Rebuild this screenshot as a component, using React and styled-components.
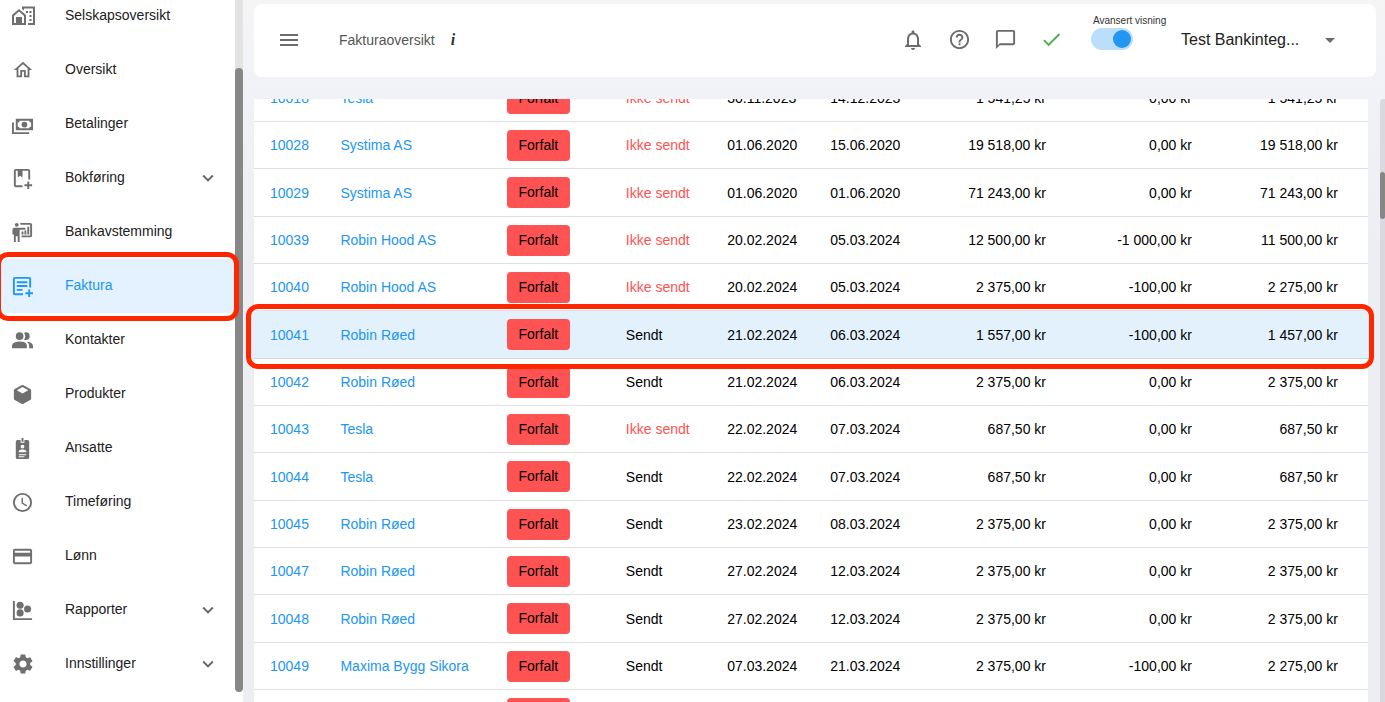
import React from "react";
import styled, { createGlobalStyle, css } from "styled-components";
import {
  MdOutlineHome,
  MdOutlineCreditCard,
  MdSettings,
  MdNotificationsNone,
  MdHelpOutline,
  MdChatBubbleOutline,
  MdCheck,
  MdArrowDropDown,
  MdExpandMore,
} from "react-icons/md";

const Global = createGlobalStyle`
  *, *::before, *::after { box-sizing: border-box; }
  body {
    margin: 0;
    overflow: hidden;
    background: #ededf4;
    color: #212121;
    font: 14px/20px "Liberation Sans", Arial, sans-serif;
  }
  button, select, input { font: inherit; color: inherit; }
`;

const Page = styled.div`
  display: flex;
  height: 100vh;
  background: linear-gradient(#f5f5f5, #f1f2f8 90px, #ededf4 260px);
`;

const Sidebar = styled.aside`
  display: flex;
  flex: none;
  width: 243px;
  background: #fff;
`;

const Nav = styled.nav`
  flex: 1;
  display: flex;
  flex-direction: column;
  justify-content: flex-end;
  padding-bottom: 11px;
`;

const NavItem = styled.a`
  position: relative;
  display: flex;
  flex: none;
  align-items: center;
  height: 54px;
  padding: 0 16px 0 10px;
  color: ${(p) => (p.$active ? "#2196f3" : "#212121")};
  background: ${(p) => (p.$active ? "#e4f1fe" : "transparent")};
  text-decoration: none;
`;

const NavIcon = styled.span`
  display: flex;
  width: 25px;
  justify-content: center;
  margin-right: 30px;
  color: ${(p) => (p.$active ? "#2196f3" : "#6f6f6f")};
`;

const NavLabel = styled.span`
  flex: 1;
  padding-bottom: 2px;
`;

const Chevron = styled(MdExpandMore)`
  color: #666;
`;

const marker = css`
  content: "";
  position: absolute;
  border: 5px solid #ff2600;
  border-radius: 12px;
  pointer-events: none;
  z-index: 3;
`;

const MarkedNavItem = styled(NavItem)`
  &::after {
    ${marker}
    inset: -7px -4px -8px -4px;
  }
`;

const SideTrack = styled.div`
  flex: none;
  width: 8px;
  padding: 68px 0 10px;
  background: linear-gradient(#e3e3e3, #e3e3e3 80%, #fff 80%);
`;

const Thumb = styled.div`
  height: ${(p) => p.$height};
  border-radius: 4px;
  background: #878787;
`;

const Main = styled.main`
  flex: 1;
  min-width: 0;
  display: flex;
  flex-direction: column;
  padding: 4px 0 0 11px;
`;

const Header = styled.header`
  display: flex;
  flex: none;
  align-items: center;
  height: 73px;
  margin-right: 9px;
  padding: 0 34px 2px 23px;
  border-radius: 8px;
  background: #fff;
`;

const IconButton = styled.button`
  display: flex;
  align-items: center;
  justify-content: center;
  width: 24px;
  height: 24px;
  padding: 0;
  border: 0;
  background: none;
  color: ${(p) => p.$color || "#6b6b6b"};
`;

const Title = styled.h1`
  margin: 0 16px 0 38px;
  color: #555;
  font-size: 14px;
  font-weight: 400;
`;

const Info = styled.button`
  padding: 0;
  border: 0;
  background: none;
  color: #333;
  font: italic 700 16px/20px "Liberation Serif", serif;
`;

const Actions = styled.div`
  display: flex;
  gap: 22px;
  margin-left: auto;
`;

const Toggle = styled.label`
  display: flex;
  flex-direction: column;
  width: 90px;
  margin: 0 0 18px 28px;
  font-size: 10px;
  line-height: 14px;
  white-space: nowrap;
  color: #333;
`;

const ToggleText = styled.span`
  margin: 2px 2px 0;
`;

const Switch = styled.input`
  appearance: none;
  width: 42px;
  height: 22px;
  margin: 0;
  padding: 2px;
  border-radius: 11px;
  background: #bbdefb;
  display: flex;
  justify-content: flex-end;

  &::before {
    content: "";
    width: 18px;
    height: 18px;
    border-radius: 50%;
    background: #2196f3;
  }
`;

const Company = styled.div`
  display: flex;
  align-items: center;
  width: 161px;
`;

const CompanySelect = styled.select`
  flex: 1;
  min-width: 0;
  appearance: none;
  padding: 0;
  border: 0;
  background: none;
  font-size: 16px;
  line-height: 24px;
`;

const Content = styled.div`
  flex: 1;
  min-height: 0;
  display: flex;
  margin-top: 22px;
`;

const Clip = styled.div`
  flex: 1;
  min-width: 0;
  display: flex;
  flex-direction: column;
  clip-path: inset(0 -10px 0 -10px);
`;

const Table = styled.table`
  width: 100%;
  margin-top: -24px;
  table-layout: fixed;
  border-collapse: separate;
  border-spacing: 0;
  background: #fff;
  color: #000;
`;

const Row = styled.tr`
  position: relative;
  background: ${(p) => (p.$marked ? "#e3f1fd" : "transparent")};
  ${(p) =>
    p.$marked &&
    css`
      &::after {
        ${marker}
        inset: -7px -6px -10px -8px;
      }
    `}
`;

const Cell = styled.td`
  height: ${(p) => (p.$tall ? 48 : 47)}px;
  padding: 0;
  border-bottom: 1px solid ${(p) => (p.$marked ? "#c9dbe0" : "#e0e0e0")};
  text-align: ${(p) => (p.$num ? "right" : "left")};
  white-space: nowrap;
  color: ${(p) => (p.$warn ? "#ff5252" : "inherit")};

  &:first-child { padding-left: 16px; }
  &:last-child { padding-right: 30px; }
`;

const CellLink = styled.a`
  color: #2196f3;
  text-decoration: none;
`;

const Badge = styled.span`
  display: block;
  width: 63px;
  height: 31px;
  border-radius: 4px;
  background: #ff5252;
  line-height: 30px;
  text-align: center;
`;

const PageTrack = styled.div`
  flex: none;
  width: 5px;
  margin-left: 12px;
  padding-top: 73px;
  border-radius: 4px 0 0 0;
  background: #d9d9df;
`;

const Glyph = ({ children, size = 23 }) => (
  <svg width={size} height={size} viewBox="0 0 24 24" fill="currentColor" aria-hidden="true">
    {children}
  </svg>
);

const HomeWork = () => (
  <Glyph size={24}>
    <path d="M1 21V11l7-6 7 6v10zM3 19h2v-6h6v6h2v-7L8 7.600 3 12z" fillRule="evenodd" />
    <path d="M5 14h6v7H5zM11 2.500h13V21h-7v-2h5V4.500h-9v2l-2-1.500z" />
    <path d="M15 7h2v2h-2zM18.500 7h2v2h-2zM18.500 11h2v2h-2zM18.500 15h2v2h-2z" />
  </Glyph>
);

const Cash = () => (
  <Glyph>
    <path d="M5,6H23V18H5V6M14,9A3,3 0 0,1 17,12A3,3 0 0,1 14,15A3,3 0 0,1 11,12A3,3 0 0,1 14,9M9,8A2,2 0 0,1 7,10V14A2,2 0 0,1 9,16H19A2,2 0 0,1 21,14V10A2,2 0 0,1 19,8H9M1,10H3V20H19V22H1V10Z" />
  </Glyph>
);

const BookPlus = () => (
  <Glyph>
    <path d="M18 2H5a2 2 0 0 0-2 2v15a2 2 0 0 0 2 2h7v-2H5V4h2v7l2.500-1.800L12 11V4h6v9h2V4a2 2 0 0 0-2-2M17 15h2v3h3v2h-3v3h-2v-3h-3v-2h3z" />
  </Glyph>
);

const BoardPoll = () => (
  <Glyph>
    <path d="M20,17A2,2 0 0,0 22,15V4A2,2 0 0,0 20,2H9.46C9.81,2.61 10,3.3 10,4H20V15H11V17M15,7V9H9V22H7V16H5V22H3V14H1.5V9A2,2 0 0,1 3.5,7H15M8,4A2,2 0 0,1 6,6A2,2 0 0,1 4,4A2,2 0 0,1 6,2A2,2 0 0,1 8,4M17,6H19V14H17V6M14,10H16V14H14V10M11,11H13V14H11V11Z" />
  </Glyph>
);

const TextBoxPlus = () => (
  <Glyph>
    <path d="M17 10.500H6v2h11zM17 6.500H6v2h11zM12 14.500H6v2h6zM4 19h8.500v2H4a2 2 0 0 1-2-2V4a2 2 0 0 1 2-2h15a2 2 0 0 1 2 2v9h-2V4H4zM18 15h2v3h3v2h-3v3h-2v-3h-3v-2h3z" />
  </Glyph>
);

const People = () => (
  <Glyph>
    <path d="M16.500 17V20H1V17.500S1 13 9 13 16.500 17 16.500 17M13 7.500A4 4 0 1 0 9 11.500A4 4 0 0 0 13 7.500M16.500 13.200A5.320 5.320 0 0 1 19 17.500V20H23V17.500S23 13.700 16.500 13.200M15.500 3.500A3.800 3.800 0 0 0 13.600 4.100A5.600 5.600 0 0 1 13.600 10.900A3.800 3.800 0 0 0 15.500 11.500A4 4 0 0 0 15.500 3.500Z" />
  </Glyph>
);

const Cube = () => (
  <Glyph>
    <path d="M21,16.5C21,16.88 20.79,17.21 20.47,17.38L12.57,21.82C12.41,21.94 12.21,22 12,22C11.79,22 11.59,21.94 11.43,21.82L3.53,17.38C3.21,17.21 3,16.88 3,16.5V7.5C3,7.12 3.21,6.79 3.53,6.62L11.43,2.18C11.59,2.06 11.79,2 12,2C12.21,2 12.41,2.06 12.57,2.18L20.47,6.62C20.79,6.79 21,7.12 21,7.5V16.5M12,4.15L6.04,7.5L12,10.85L17.96,7.5L12,4.15Z" />
  </Glyph>
);

const IdBadge = () => (
  <Glyph>
    <path
      fillRule="evenodd"
      d="M17 3h-3v3h-4V3H7a2 2 0 0 0-2 2v16a2 2 0 0 0 2 2h10a2 2 0 0 0 2-2V5a2 2 0 0 0-2-2M12 8a2 2 0 1 1 0 4 2 2 0 0 1 0-4M8 16v-1c0-1.300 2.700-2 4-2s4 .700 4 2v1zM8 18h8v1H8zM8 20h6v1H8z"
    />
    <path d="M11 1h2v4h-2z" />
  </Glyph>
);

const Clock = () => (
  <Glyph>
    <path d="M12 20A8 8 0 0 0 20 12A8 8 0 0 0 12 4A8 8 0 0 0 4 12A8 8 0 0 0 12 20M12 2A10 10 0 0 1 22 12A10 10 0 0 1 12 22A10 10 0 0 1 2 12A10 10 0 0 1 12 2M12.500 7V12.250L17 14.920L16.250 16.150L11 13V7H12.500Z" />
  </Glyph>
);

const Bubbles = () => (
  <Glyph>
    <path d="M2 2h2v18h18v2H2z" />
    <circle cx="9.500" cy="6.500" r="3.700" />
    <circle cx="9.500" cy="14.500" r="3.700" />
    <circle cx="17.300" cy="10.500" r="3.700" />
  </Glyph>
);

const Burger = () => (
  <Glyph size={24}>
    <path d="M3 6h18v2H3zM3 11h18v2H3zM3 16h18v2H3z" />
  </Glyph>
);

const navItems = [
  { label: "Selskapsoversikt", icon: <HomeWork /> },
  { label: "Oversikt", icon: <MdOutlineHome size={22} /> },
  { label: "Betalinger", icon: <Cash /> },
  { label: "Bokføring", icon: <BookPlus />, expandable: true },
  { label: "Bankavstemming", icon: <BoardPoll /> },
  { label: "Faktura", icon: <TextBoxPlus />, active: true },
  { label: "Kontakter", icon: <People /> },
  { label: "Produkter", icon: <Cube /> },
  { label: "Ansatte", icon: <IdBadge /> },
  { label: "Timeføring", icon: <Clock /> },
  { label: "Lønn", icon: <MdOutlineCreditCard size={23} /> },
  { label: "Rapporter", icon: <Bubbles />, expandable: true },
  { label: "Innstillinger", icon: <MdSettings size={24} />, expandable: true },
];

const LATE = "Ikke sendt";
const invoices = [
  ["10018", "Tesla", LATE, "30.11.2023", "14.12.2023", "1 541,25", "0,00", "1 541,25"],
  ["10028", "Systima AS", LATE, "01.06.2020", "15.06.2020", "19 518,00", "0,00", "19 518,00"],
  ["10029", "Systima AS", LATE, "01.06.2020", "01.06.2020", "71 243,00", "0,00", "71 243,00"],
  ["10039", "Robin Hood AS", LATE, "20.02.2024", "05.03.2024", "12 500,00", "-1 000,00", "11 500,00"],
  ["10040", "Robin Hood AS", LATE, "20.02.2024", "05.03.2024", "2 375,00", "-100,00", "2 275,00"],
  ["10041", "Robin Røed", "Sendt", "21.02.2024", "06.03.2024", "1 557,00", "-100,00", "1 457,00"],
  ["10042", "Robin Røed", "Sendt", "21.02.2024", "06.03.2024", "2 375,00", "0,00", "2 375,00"],
  ["10043", "Tesla", LATE, "22.02.2024", "07.03.2024", "687,50", "0,00", "687,50"],
  ["10044", "Tesla", "Sendt", "22.02.2024", "07.03.2024", "687,50", "0,00", "687,50"],
  ["10045", "Robin Røed", "Sendt", "23.02.2024", "08.03.2024", "2 375,00", "0,00", "2 375,00"],
  ["10047", "Robin Røed", "Sendt", "27.02.2024", "12.03.2024", "2 375,00", "0,00", "2 375,00"],
  ["10048", "Robin Røed", "Sendt", "27.02.2024", "12.03.2024", "2 375,00", "0,00", "2 375,00"],
  ["10049", "Maxima Bygg Sikora", "Sendt", "07.03.2024", "21.03.2024", "2 375,00", "-100,00", "2 275,00"],
];

const columnShares = [7.76, 14.94, 10.68, 9.1, 9.25, 8.87, 10.5, 13.1, 15.8];

function InvoiceRow({ invoice, index }) {
  const [number, customer, status, date, due, amount, paid, rest] = invoice;
  const marked = number === "10041";
  const shared = { $marked: marked, $tall: index % 3 === 2 };
  return (
    <Row $marked={marked}>
      <Cell {...shared}><CellLink href="#faktura">{number}</CellLink></Cell>
      <Cell {...shared}><CellLink href="#kunde">{customer}</CellLink></Cell>
      <Cell {...shared}><Badge>Forfalt</Badge></Cell>
      <Cell {...shared} $warn={status === LATE}>{status}</Cell>
      <Cell {...shared}>{date}</Cell>
      <Cell {...shared}>{due}</Cell>
      <Cell {...shared} $num>{amount} kr</Cell>
      <Cell {...shared} $num>{paid} kr</Cell>
      <Cell {...shared} $num>{rest} kr</Cell>
    </Row>
  );
}

export default function App() {
  return (
    <>
      <Global />
      <Page>
        <Sidebar>
          <Nav>
            {navItems.map(({ label, icon, active, expandable }) => {
              const Item = active ? MarkedNavItem : NavItem;
              return (
                <Item key={label} href="#" $active={active}>
                  <NavIcon $active={active}>{icon}</NavIcon>
                  <NavLabel>{label}</NavLabel>
                  {expandable && <Chevron size={22} />}
                </Item>
              );
            })}
          </Nav>
          <SideTrack><Thumb $height="100%" /></SideTrack>
        </Sidebar>
        <Main>
          <Header>
            <IconButton aria-label="Meny"><Burger /></IconButton>
            <Title>Fakturaoversikt</Title>
            <Info aria-label="Informasjon">i</Info>
            <Actions>
              <IconButton aria-label="Varsler"><MdNotificationsNone size={24} /></IconButton>
              <IconButton aria-label="Hjelp"><MdHelpOutline size={23} /></IconButton>
              <IconButton aria-label="Meldinger"><MdChatBubbleOutline size={23} /></IconButton>
              <IconButton aria-label="Status" $color="#4caf50"><MdCheck size={23} /></IconButton>
            </Actions>
            <Toggle>
              <ToggleText>Avansert visning</ToggleText>
              <Switch type="checkbox" defaultChecked />
            </Toggle>
            <Company>
              <CompanySelect aria-label="Selskap" defaultValue="test">
                <option value="test">Test Bankinteg...</option>
              </CompanySelect>
              <MdArrowDropDown size={24} color="#6b6b6b" />
            </Company>
          </Header>
          <Content>
            <Clip>
              <Table>
                <colgroup>
                  {columnShares.map((share, i) => (
                    <col key={i} style={{ width: `${share}%` }} />
                  ))}
                </colgroup>
                <tbody>
                  {invoices.map((invoice, i) => (
                    <InvoiceRow key={invoice[0]} invoice={invoice} index={i} />
                  ))}
                  <Row>
                    <Cell colSpan={2} />
                    <Cell><Badge /></Cell>
                    <Cell colSpan={6} />
                  </Row>
                </tbody>
              </Table>
            </Clip>
            <PageTrack><Thumb $height="47px" /></PageTrack>
          </Content>
        </Main>
      </Page>
    </>
  );
}
